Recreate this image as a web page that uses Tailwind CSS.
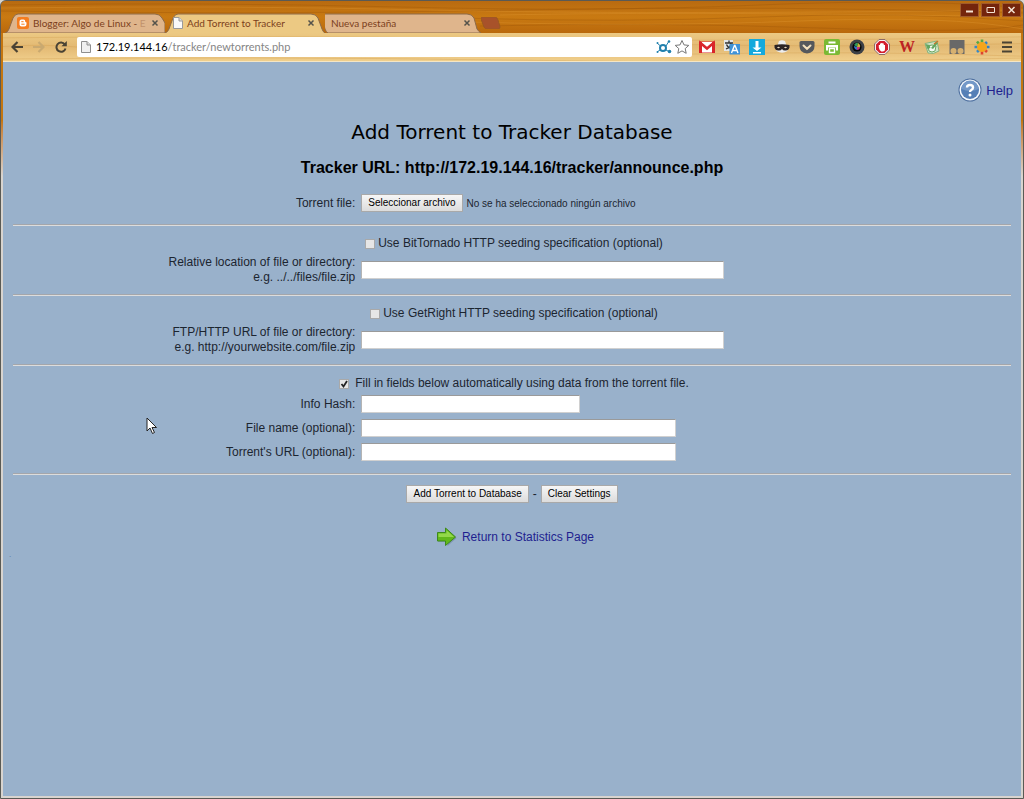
<!DOCTYPE html>
<html lang="es">
<head>
  <meta charset="UTF-8" />
  <meta name="viewport" content="width=device-width, initial-scale=1.0"/>
  <title>Add Torrent to Tracker</title>
  <script src="https://cdn.jsdelivr.net/npm/@tailwindcss/browser@4"></script>
</head>
<body class="bg-[#d8d4cf]">
  <div class="relative flex flex-col min-h-screen border border-[#5a5a55] rounded-t-md bg-linear-to-b from-[#c4760f] from-15% to-[#d8d4cf] to-22% px-0.5 pb-0.5 overflow-hidden">

    <!-- Title bar and tabs -->
    <header class="relative flex items-end pt-3 px-1 bg-linear-to-b from-[#b86a10] via-[#c97a12] to-[#b9680c] -mx-0.5 font-['Lato',sans-serif] text-[10px] text-[#7c3f1c]">
      <svg class="absolute inset-0 w-full h-full" viewBox="0 0 1024 32" preserveAspectRatio="none" fill="none" stroke="#9a540a" stroke-opacity=".35">
        <path d="M0 4Q200 1 400 6T760 4T1024 7M0 10Q260 14 520 9T1024 12M460 17Q620 22 760 16T1024 20M480 25Q660 21 820 27T1024 24"/>
        <path stroke="#e39a35" d="M0 7Q220 4 430 9T1024 9M470 21Q650 26 800 20T1024 28M500 14Q700 10 1024 16"/>
      </svg>
      <nav class="relative flex h-5 w-[500px]">
        <div class="relative flex items-center w-[160px] pl-3 pr-1.5">
          <svg class="absolute inset-0 w-full h-full" viewBox="0 0 160 20" preserveAspectRatio="none"><path d="M0 20Q3 19 4 16L8 5Q10 1 13 1H150Q155 1 157 5L160 10V20Z" fill="#dfb58c" stroke="#8d6a48"/></svg>
          <svg class="relative size-3 shrink-0" viewBox="0 0 12 12"><rect width="12" height="12" rx="2" fill="#f57d1f"/><path d="M4.500 2.500h2a1.700 1.700 0 0 1 1.700 1.900q0 .8.900.8.400 0 .4.600v1.400A2.200 2.200 0 0 1 7.300 9.500H4.500A2 2 0 0 1 2.500 7.500V4.500A2 2 0 0 1 4.500 2.500Z" fill="#fff"/><path d="M4.700 4.700h1.500M4.700 7.200h2.500" stroke="#f57d1f" stroke-linecap="round"/></svg>
          <a href="#" class="relative ml-1 whitespace-nowrap">Blogger: Algo de Linux - <span class="opacity-30">E</span></a>
          <button aria-label="Cerrar" class="relative ml-auto"><svg class="size-2" viewBox="0 0 8 8"><path d="M1.500 1.500l5 5m0-5l-5 5" stroke="#55534b" stroke-width="1.500"/></svg></button>
        </div>
        <div class="relative z-10 flex items-center w-[160px] pl-2 pr-2.5">
          <svg class="absolute inset-0 w-full h-full" viewBox="0 0 160 20" preserveAspectRatio="none"><path d="M0 20Q3 19 4 16L8 5Q10 1 13 1H146Q151 1 153 5L157 16Q158 19 160 20Z" fill="#ecc983"/><path d="M0 20Q3 19 4 16L8 5Q10 1 13 1H146Q151 1 153 5L157 16Q158 19 160 20" fill="none" stroke="#8d6a48"/></svg>
          <svg class="relative w-2.5 h-3 shrink-0" viewBox="0 0 10 12"><path d="M.5.5h5.500l3.500 3.500v7.500h-9z" fill="#fafafa" stroke="#9a9a9a"/><path d="M6 .5V4h3.500" fill="#ddd" stroke="#9a9a9a"/></svg>
          <a href="#" class="relative ml-1 whitespace-nowrap">Add Torrent to Tracker</a>
          <button aria-label="Cerrar" class="relative ml-auto"><svg class="size-2" viewBox="0 0 8 8"><path d="M1.500 1.500l5 5m0-5l-5 5" stroke="#55534b" stroke-width="1.500"/></svg></button>
        </div>
        <div class="relative flex items-center w-[156px] pl-1.5 pr-2.5">
          <svg class="absolute inset-0 w-full h-full" viewBox="0 0 156 20" preserveAspectRatio="none"><path d="M-4 1H142Q147 1 149 5L152 16Q154 19 156 20H3Q1 19 0 16Z" fill="#dfb58c" stroke="#8d6a48"/></svg>
          <a href="#" class="relative">Nueva pestaña</a>
          <button aria-label="Cerrar" class="relative ml-auto"><svg class="size-2" viewBox="0 0 8 8"><path d="M1.500 1.500l5 5m0-5l-5 5" stroke="#55534b" stroke-width="1.500"/></svg></button>
        </div>
        <button aria-label="Nueva pestaña" class="relative"><svg class="w-5 h-3" viewBox="0 0 20 12"><path d="M1 0H14Q16 0 17 3L19 10Q19 12 17 12H6Q4 12 3 10L0 2Q0 0 1 0Z" fill="#a8522a" stroke="#9a5a22"/></svg></button>
      </nav>
      <div class="absolute right-0.5 top-0.5 flex gap-0.5">
        <button aria-label="Minimizar"><svg class="w-[19px] h-[14px]" viewBox="0 0 19 14"><path d="M.5.5h18v13H.5z" fill="#74250c" stroke="#a05a2c"/><path d="M6 8.500h7" stroke="#f4e4d4" stroke-width="2"/></svg></button>
        <button aria-label="Maximizar"><svg class="w-[19px] h-[14px]" viewBox="0 0 19 14"><path d="M.5.5h18v13H.5z" fill="#74250c" stroke="#a05a2c"/><path d="M6 4.500h7.500v5H6z" fill="none" stroke="#f4e4d4"/></svg></button>
        <button aria-label="Cerrar ventana"><svg class="w-[19px] h-[14px]" viewBox="0 0 19 14"><path d="M.5.5h18v13H.5z" fill="#74250c" stroke="#a05a2c"/><path d="M6.500 4l6 6m0-6l-6 6" stroke="#f4e4d4" stroke-width="1.500"/></svg></button>
      </div>
    </header>

    <!-- Toolbar -->
    <div class="relative flex items-center h-[29px] pl-2 pr-1.5 bg-linear-to-b from-[#ecc983] via-[#e3b973] to-[#f0cf8c] border-b border-[#f5e6c4]">
      <svg class="absolute inset-0 w-full h-full" viewBox="0 0 1020 29" preserveAspectRatio="none" fill="none" stroke="#cf9a4c" stroke-opacity=".35"><path d="M0 5Q250 2 500 6T1020 4M0 14Q40 11 80 15M680 12Q850 15 1020 11M680 22Q860 18 1020 24M0 27Q250 24 500 28T1020 26"/></svg>
      <div class="relative flex items-center gap-2.5 w-[66px]">
        <button aria-label="Atrás"><svg class="w-3 h-3" viewBox="0 0 12 12" fill="none" stroke="#4a4334" stroke-width="2.200"><path d="M12 6H2M6.500 1L1.500 6l5 5"/></svg></button>
        <button aria-label="Adelante"><svg class="w-3 h-3" viewBox="0 0 12 12" fill="none" stroke="#c9a970" stroke-width="2.200"><path d="M0 6h10M5.500 1l5 5-5 5"/></svg></button>
        <button aria-label="Recargar"><svg class="w-3 h-3" viewBox="0 0 12 12"><path d="M9.800 3.500A4.600 4.600 0 1 0 10.500 7.500" fill="none" stroke="#4a4334" stroke-width="2"/><path d="M11.800 0v5.300H6.500z" fill="#4a4334"/></svg></button>
      </div>
      <div class="relative flex flex-1 items-center h-5 pl-1 pr-0.5 bg-white rounded-xs font-['Lato',sans-serif] text-[11px]">
        <svg class="w-2.5 h-3" viewBox="0 0 10 12"><path d="M.5.5h5.500l3.500 3.500v7.500h-9z" fill="#f0f0f0" stroke="#8e8e8e"/><path d="M6 .5V4h3.500" fill="#ddd" stroke="#8e8e8e"/></svg>
        <a href="#" class="ml-[5px] text-[#858585]"><span class="text-black">172.19.144.16</span>/tracker/newtorrents.php</a>
        <svg class="ml-auto w-4 h-4" viewBox="0 0 16 16" fill="none" stroke="#2180ad"><circle cx="7" cy="9" r="3" stroke-width="2"/><path d="M1 4l3.500 3M10 7l3-5M1 13l3-2M10 11l2 1"/><g fill="#2180ad" stroke="none"><circle cx="1.500" cy="4" r="1"/><circle cx="13" cy="2.500" r="1.300"/><circle cx="13.500" cy="12.500" r="1.800"/><circle cx="1.500" cy="13" r="1"/></g></svg>
        <button aria-label="Marcador" class="ml-0.5"><svg class="w-4 h-4" viewBox="0 0 16 16"><path d="M8 1.500l2 4.400 4.800.5-3.600 3.200 1 4.700L8 11.900l-4.200 2.400 1-4.700L1.200 6.400 6 5.900z" fill="#fff" stroke="#777"/></svg></button>
      </div>
      <div class="relative flex items-center gap-[9px] pl-[7px]">
        <svg class="size-4" viewBox="0 0 16 16"><path d="M0 2.500h16v11.500H0z" fill="#d9252a"/><path d="M3 3h10v10.500H3z" fill="#fff"/><path d="M1.500 13.500V4L8 9.500 14.500 4v9.500" fill="none" stroke="#d9252a" stroke-width="2.500"/></svg>
        <svg class="size-4" viewBox="0 0 16 16"><path d="M0 1h9v11H0z" fill="#e4e6e6"/><path d="M1 4h8M5 1.500V4M2 10q5-2 5-6M2.500 5.500Q4 9 7 9" fill="none" stroke="#333" stroke-width="1.300"/><path d="M5.500 5H16v10.500H5.500z" fill="#3e92d8"/><path d="M7.500 14l3-7.500h.5l3 7.500M8.500 11.500h4.500" fill="none" stroke="#fff" stroke-width="1.400"/></svg>
        <svg class="size-4" viewBox="0 0 16 16"><path d="M0 0h16v16H0z" fill="#15a9dc"/><path d="M6.500 2h3v6.500h3L8 12 3.500 8.500h3zM4 13h8v1.500H4z" fill="#fff"/></svg>
        <svg class="size-4" viewBox="0 0 16 16"><path d="M4 5L5 2q3-1.500 6 0l1 3 1.500 7q-5.500 3.500-11 0z" fill="#ececec"/><path d="M.5 6q7.500-1.500 15 0v2.500q-1 3.500-4.500 3Q9 11.500 8 10 7 11.500 5 11.500 1.500 12 .5 8.500z" fill="#2c2424"/><path d="M3 8.500q1.500-1.500 3 0-1.500 1.500-3 0zM10 8.500q1.500-1.500 3 0-1.500 1.500-3 0z" fill="#e9d9c0"/></svg>
        <svg class="size-4" viewBox="0 0 16 16"><path d="M.5 3.500Q.5 2 2 2h12q1.500 0 1.500 1.500V7q0 7-7.500 7.500Q.5 14 .5 7z" fill="#55585c"/><path d="M4.500 6.500L8 9.800l3.500-3.300" fill="none" stroke="#f3e0bd" stroke-width="2" stroke-linecap="round"/></svg>
        <svg class="size-4" viewBox="0 0 16 16"><rect width="16" height="16" rx="2" fill="#7ab933"/><path d="M4.500 3.500h7" stroke="#fff" stroke-width="2"/><path d="M2 6h12v5.500h-2V8.500H4v3H2z" fill="#fff"/><path d="M5.500 9.500h5v4h-5z" fill="none" stroke="#fff" stroke-width="1.400"/></svg>
        <svg class="size-4" viewBox="0 0 16 16"><circle cx="8" cy="8" r="7.500" fill="#3c4046"/><circle cx="8" cy="8" r="4.600" fill="#050505"/><path d="M8 8L5 6q2-3 4-2z" fill="#2f9b5b"/><path d="M8 8l1-4q3 2 2 4z" fill="#c7b53a"/><path d="M8 8h3q0 3-3 3z" fill="#c53278"/><path d="M8 8v3q-3-1-3-4z" fill="#3574c8"/></svg>
        <svg class="size-4" viewBox="0 0 16 16"><path d="M5 .5h6L15.500 5v6L11 15.500H5L.5 11V5z" fill="#f7f0f0" stroke="#8e6b65"/><path d="M5.500 2h5L14 5.500v5L10.500 14h-5L2 10.500v-5z" fill="#d41d2d"/><path d="M4.800 8.500V6h1.200V4.500h1.200V4h1.300v.5h1.300V6H11v4q0 2.500-2.500 2.500H7.300Q5.500 12 4.800 8.500z" fill="#fff"/></svg>
        <span class="w-4 text-center font-['Liberation_Serif',serif] font-bold text-base leading-4 text-[#bd2222]">W</span>
        <svg class="size-4" viewBox="0 0 16 16"><path d="M1 4.500L13 2l2 10q-6 4-11 2z" fill="#cfe3c6" stroke="#86b37c"/><path d="M4 7q4-2 8 0l-1 5q-3 2-6 0z" fill="#f4f8f0" stroke="#6aa860"/><path d="M1.500 5l4 1 1 3-3 1zM7 9l5-6 2 1-5 6z" fill="#63a660"/><path d="M10 5l4-3" stroke="#c6782c" stroke-width="1.500"/></svg>
        <svg class="size-4" viewBox="0 0 16 16"><path d="M.5 1h15v14H.5z" fill="#686868"/><circle cx="4.500" cy="12" r="3" fill="#d6b070"/><circle cx="11.500" cy="12" r="3" fill="#d6b070"/></svg>
        <svg class="size-4" viewBox="0 0 16 16" fill="none" stroke-width="2.600"><path d="M8 .5v4M3 2.500l2.500 3" stroke="#55a844"/><path d="M15.500 8h-4M13 3l-3 3" stroke="#2d80cb"/><path d="M8 15.500v-4M13 13l-3-3" stroke="#df432c"/><path d="M.5 8h4M3 13l3-3" stroke="#3588c9"/><circle cx="8" cy="8" r="5" fill="#f5a51c" stroke="none"/></svg>
        <button aria-label="Menú" class="px-0.5"><svg class="w-3 h-4" viewBox="0 0 12 16"><path d="M1 3.500h10M1 8h10M1 12.500h10" stroke="#4a4334" stroke-width="2.200"/></svg></button>
      </div>
    </div>

    <!-- Page -->
    <main class="relative flex-1 bg-[#99b1cb] px-2.5 pt-4 font-['Liberation_Sans',sans-serif] text-[12px] leading-[15px] text-[#1c2530]">
      <div class="flex justify-end -mr-0.5">
        <a href="#" class="flex items-center gap-1 text-[13px] text-[#1f1f8f]">
          <svg class="size-6" viewBox="0 0 24 24"><circle cx="12" cy="12" r="11.500" fill="#4d6f9f"/><circle cx="12" cy="12" r="10.500" fill="#f5f8fc"/><circle cx="12" cy="12" r="9" fill="#557fb6"/><path d="M3.500 11a8.500 8.500 0 0 1 17 0q-8 4-17 0z" fill="#7398c8"/><path d="M9 9.500Q9 7 12 7t3 2.500q0 1.500-1.500 2.300Q12 12.600 12 14" fill="none" stroke="#fff" stroke-width="2.400"/><circle cx="12" cy="17" r="1.500" fill="#fff"/></svg>
          Help
        </a>
      </div>
      <h1 class="mt-4 text-center font-['DejaVu_Sans',sans-serif] text-[20px] leading-7 text-black">Add Torrent to Tracker Database</h1>
      <h2 class="mt-3 text-center text-base leading-5 font-bold text-black">Tracker URL: http://172.19.144.16/tracker/announce.php</h2>

      <form>
        <div class="grid grid-cols-[345fr_655fr] gap-x-1.5 items-center mt-4 pb-3">
          <label for="torrent" class="text-right">Torrent file:</label>
          <div class="flex items-center text-[10px]">
            <input type="file" id="torrent" class="sr-only">
            <label for="torrent" class="px-1.5 h-[18px] leading-4 border border-[#a9a9a9] bg-linear-to-b from-[#f6f6f6] to-[#dcdcdc] text-black">Seleccionar archivo</label>
            <span class="ml-1">No se ha seleccionado ningún archivo</span>
          </div>
        </div>

        <hr class="border-t-[#a4a6ab] border-b border-b-[#dcdcdc]">
        <div class="flex justify-center items-center gap-[3px] pt-2.5 pl-1">
          <input type="checkbox" id="bittornado" class="appearance-none size-2.5 border border-[#a9a9a9] bg-[#e6e6e6]">
          <label for="bittornado">Use BitTornado HTTP seeding specification (optional)</label>
        </div>
        <div class="grid grid-cols-[345fr_655fr] gap-x-1.5 items-center pt-1 pb-[9px]">
          <label for="relative" class="text-right">Relative location of file or directory:<br>e.g. ../../files/file.zip</label>
          <input type="text" id="relative" class="w-[363px] h-[18px] px-1 bg-white border border-[#d0d0d0] border-t-[#9a9a9a] border-l-[#b4b4b4]">
        </div>

        <hr class="border-t-[#a4a6ab] border-b border-b-[#dcdcdc]">
        <div class="flex justify-center items-center gap-[3px] pt-2.5 pl-1">
          <input type="checkbox" id="getright" class="appearance-none size-2.5 border border-[#a9a9a9] bg-[#e6e6e6]">
          <label for="getright">Use GetRight HTTP seeding specification (optional)</label>
        </div>
        <div class="grid grid-cols-[345fr_655fr] gap-x-1.5 items-center pt-1 pb-[9px]">
          <label for="ftp" class="text-right">FTP/HTTP URL of file or directory:<br>e.g. http://yourwebsite.com/file.zip</label>
          <input type="text" id="ftp" class="w-[363px] h-[18px] px-1 bg-white border border-[#d0d0d0] border-t-[#9a9a9a] border-l-[#b4b4b4]">
        </div>

        <hr class="border-t-[#a4a6ab] border-b border-b-[#dcdcdc]">
        <div class="flex justify-center items-center gap-1.5 pt-2.5 pl-1">
          <div class="relative flex">
            <input type="checkbox" id="autofill" checked class="appearance-none size-2.5 border border-[#a9a9a9] bg-[#e6e6e6]">
            <svg class="absolute inset-0 size-2.5 pointer-events-none" viewBox="0 0 10 10"><path d="M2.500 5l2 2.500L8 2" fill="none" stroke="#222" stroke-width="1.800"/></svg>
          </div>
          <label for="autofill">Fill in fields below automatically using data from the torrent file.</label>
        </div>
        <div class="grid grid-cols-[345fr_655fr] gap-x-1.5 gap-y-1.5 items-center pt-1 pb-3">
          <label for="hash" class="text-right">Info Hash:</label>
          <input type="text" id="hash" class="w-[219px] h-[18px] px-1 bg-white border border-[#d0d0d0] border-t-[#9a9a9a] border-l-[#b4b4b4]">
          <label for="filename" class="text-right">File name (optional):</label>
          <input type="text" id="filename" class="w-[315px] h-[18px] px-1 bg-white border border-[#d0d0d0] border-t-[#9a9a9a] border-l-[#b4b4b4]">
          <label for="url" class="text-right">Torrent's URL (optional):</label>
          <input type="text" id="url" class="w-[315px] h-[18px] px-1 bg-white border border-[#d0d0d0] border-t-[#9a9a9a] border-l-[#b4b4b4]">
        </div>

        <hr class="border-t-[#a4a6ab] border-b border-b-[#dcdcdc]">
        <div class="flex justify-center items-center gap-1 pt-2.5">
          <button type="submit" class="px-1.5 h-[18px] leading-4 text-[10px] border border-[#a9a9a9] bg-linear-to-b from-[#f6f6f6] to-[#dcdcdc] text-black">Add Torrent to Database</button>
          <span>-</span>
          <button type="reset" class="px-1.5 h-[18px] leading-4 text-[10px] border border-[#a9a9a9] bg-linear-to-b from-[#f6f6f6] to-[#dcdcdc] text-black">Clear Settings</button>
        </div>
      </form>

      <div class="flex justify-center mt-6 pl-1.5">
        <a href="#" class="flex items-center gap-1 text-[#1f1f8f]">
          <svg class="w-[22px] h-5" viewBox="0 0 22 20"><path d="M2 6.500h8.500V1.500L20.500 11l-9 8v-4.500H2z" fill="#5d7393" opacity=".5"/><path d="M1.500 5.500h8V1L19.500 10l-10 8.500V14h-8z" fill="#62b81b" stroke="#3d8a1a"/><path d="M2.500 6.500h8V3.200L18 10H2.500z" fill="#93d84a"/></svg>
          Return to Statistics Page
        </a>
      </div>
      <p class="-ml-1 text-[8px] leading-4 text-[#56749c]">.</p>
    </main>

    <!-- Mouse pointer -->
    <svg class="absolute left-[145px] top-[416px] w-3 h-[18px]" viewBox="0 0 12 18"><path d="M1 1v13l3-3 2.500 5.500 2-1L6 10.500h4.500z" fill="#fff" stroke="#222"/></svg>
  </div>
</body>
</html>
